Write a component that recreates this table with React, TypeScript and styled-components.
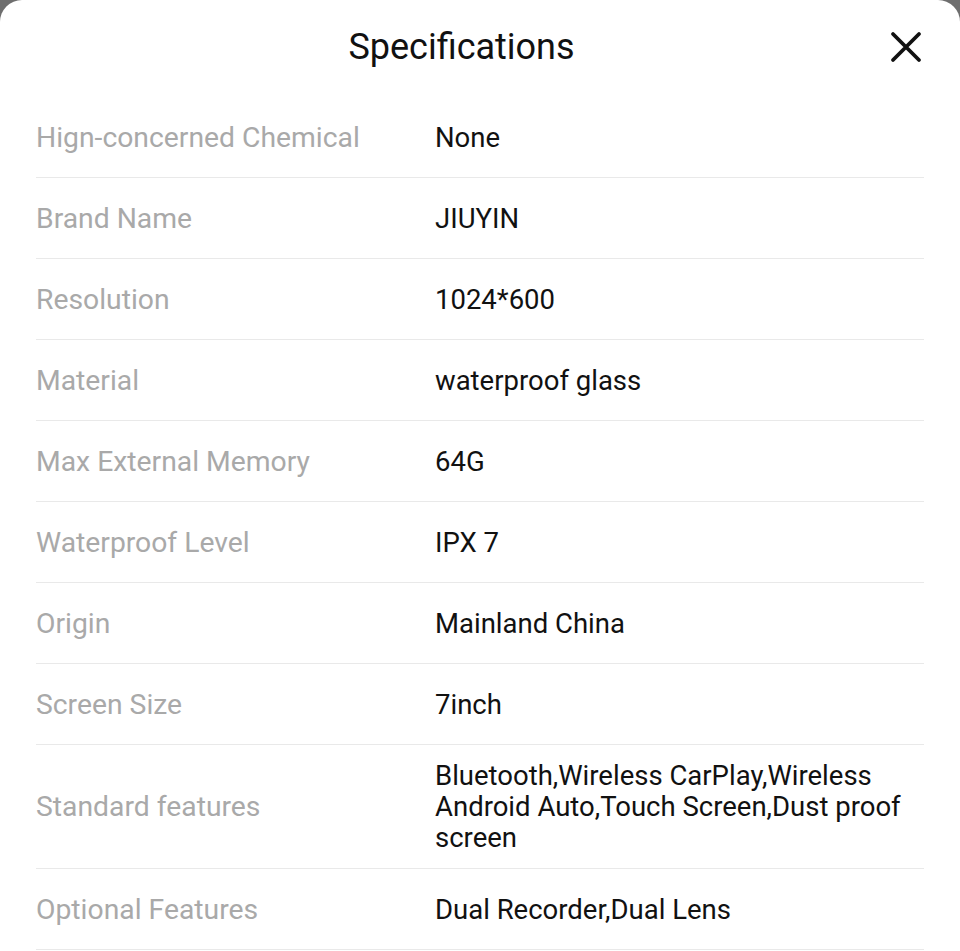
import React from "react";
import styled, { createGlobalStyle } from "styled-components";

const Global = createGlobalStyle`
  html, body { margin: 0; padding: 0; background: #6e6e6e; }
  body { font-family: Roboto, "Noto Sans", sans-serif; }
`;

const Sheet = styled.div`
  background: #fff;
  border-radius: 22px 22px 0 0;
  min-height: 951px;
  box-sizing: border-box;
  padding: 0 36px;
`;

const Header = styled.header`
  position: relative;
  height: 97px;
  display: flex;
  align-items: center;
  justify-content: center;
`;

const Title = styled.h1`
  margin: 0 37px 4px 0;
  font-size: 36px;
  font-weight: 400;
  color: #111;
`;

const Close = styled.button`
  position: absolute;
  right: 0;
  top: 29px;
  width: 36px;
  height: 36px;
  padding: 0;
  border: 0;
  background: none;
  display: flex;
  align-items: center;
  justify-content: center;
`;

const List = styled.dl`
  margin: 0;
`;

const Row = styled.div`
  display: grid;
  grid-template-columns: 399px 1fr;
  align-items: center;
  min-height: 81px;
  padding: 15px 0;
  box-sizing: border-box;
  border-bottom: 1px solid #e9e9e9;
  line-height: 31px;
`;

const Label = styled.dt`
  color: #a9a9a9;
  font-size: 28.3px;
`;

const Value = styled.dd`
  margin: 0;
  color: #111;
  font-size: 27.5px;
`;

const specs: [string, string][] = [
  ["Hign-concerned Chemical", "None"],
  ["Brand Name", "JIUYIN"],
  ["Resolution", "1024*600"],
  ["Material", "waterproof glass"],
  ["Max External Memory", "64G"],
  ["Waterproof Level", "IPX 7"],
  ["Origin", "Mainland China"],
  ["Screen Size", "7inch"],
  ["Standard features", "Bluetooth,Wireless CarPlay,Wireless Android Auto,Touch Screen,Dust proof screen"],
  ["Optional Features", "Dual Recorder,Dual Lens"],
];

export default function App() {
  return (
    <>
      <Global />
      <Sheet>
        <Header>
          <Title>Specifications</Title>
          <Close aria-label="Close">
            <svg width="34" height="34" viewBox="0 0 34 34">
              <path d="M4 4L30 30M30 4L4 30" stroke="#111" strokeWidth="3.8" strokeLinecap="round" />
            </svg>
          </Close>
        </Header>
        <List>
          {specs.map(([k, v]) => (
            <Row key={k}>
              <Label>{k}</Label>
              <Value>{v}</Value>
            </Row>
          ))}
        </List>
      </Sheet>
    </>
  );
}
